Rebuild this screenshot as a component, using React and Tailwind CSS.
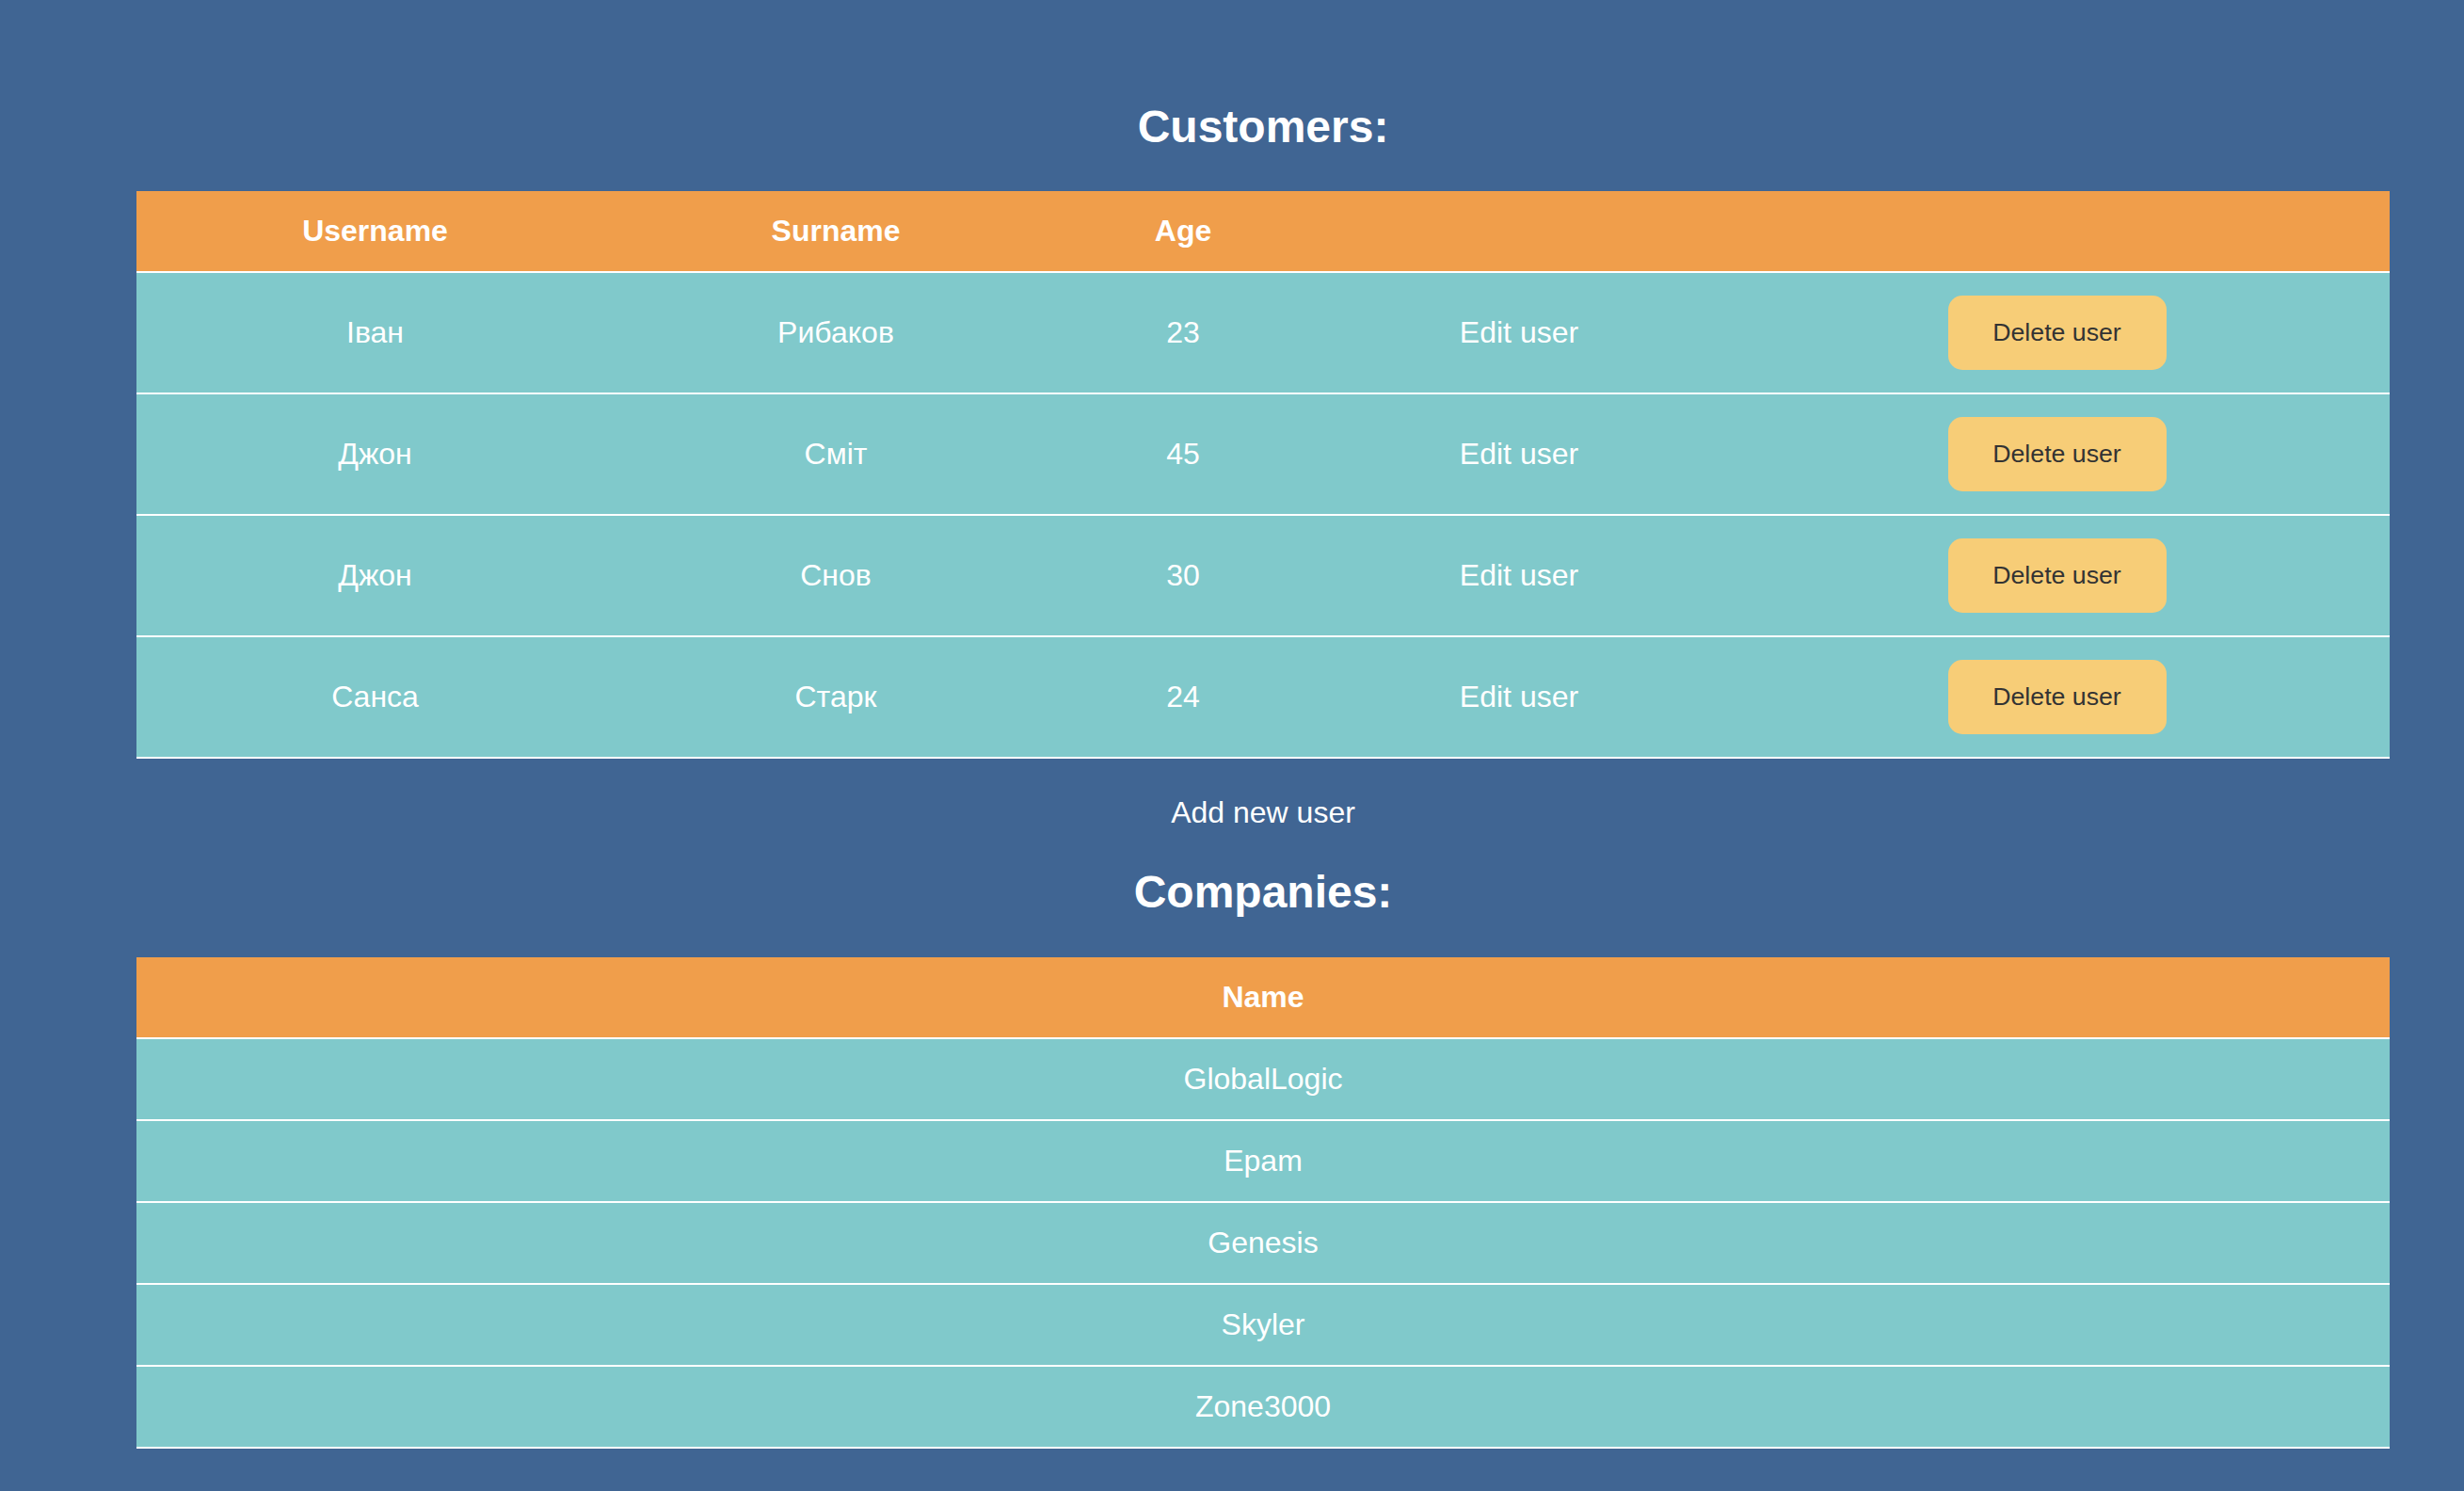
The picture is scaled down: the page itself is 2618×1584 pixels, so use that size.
import React from "react";

const customers = [
  { name: "Іван", surname: "Рибаков", age: 23 },
  { name: "Джон", surname: "Сміт", age: 45 },
  { name: "Джон", surname: "Снов", age: 30 },
  { name: "Санса", surname: "Старк", age: 24 },
];

const companies = ["GlobalLogic", "Epam", "Genesis", "Skyler", "Zone3000"];

const cols = "grid grid-cols-[507px_472px_266px_448px_701px]";

export default function App() {
  return (
    <div
      className="min-h-screen bg-[#406593] pl-[145px] pr-[79px] pt-[107px] pb-[45px] text-white"
      style={{ fontFamily: '"Liberation Sans", Arial, sans-serif' }}
    >
      {/* Customers */}
      <h2 className="text-center text-[48px] font-bold leading-[56px] mb-[40px]">
        Customers:
      </h2>

      <div className="w-full">
        <div className={`${cols} h-[87px] items-center bg-[#f09e4b] border-b-2 border-white text-[32px] font-bold leading-[37px]`}>
          <div className="text-center">Username</div>
          <div className="text-center">Surname</div>
          <div className="text-center">Age</div>
          <div></div>
          <div></div>
        </div>
        {customers.map((c, i) => (
          <div
            key={i}
            className={`${cols} h-[129px] items-center bg-[#80c9cb] border-b-2 border-white text-[32px] leading-[37px]`}
          >
            <div className="text-center">{c.name}</div>
            <div className="text-center">{c.surname}</div>
            <div className="text-center">{c.age}</div>
            <div className="text-center">Edit user</div>
            <div className="flex justify-center pr-[6px]">
              <button className="w-[232px] h-[79px] rounded-[15px] bg-[#f7cd77] text-[#333333] text-[26.7px] leading-[31px]">
                Delete user
              </button>
            </div>
          </div>
        ))}
      </div>

      <p className="text-center text-[32px] leading-[37px] mt-[39px]">Add new user</p>

      {/* Companies */}
      <h2 className="text-center text-[48px] font-bold leading-[56px] mt-[38px] mb-[41px]">
        Companies:
      </h2>

      <div className="w-full">
        <div className="h-[87px] flex items-center justify-center bg-[#f09e4b] border-b-2 border-white text-[32px] font-bold leading-[37px]">
          Name
        </div>
        {companies.map((n) => (
          <div
            key={n}
            className="h-[87px] flex items-center justify-center bg-[#80c9cb] border-b-2 border-white text-[32px] leading-[37px]"
          >
            {n}
          </div>
        ))}
      </div>
    </div>
  );
}
